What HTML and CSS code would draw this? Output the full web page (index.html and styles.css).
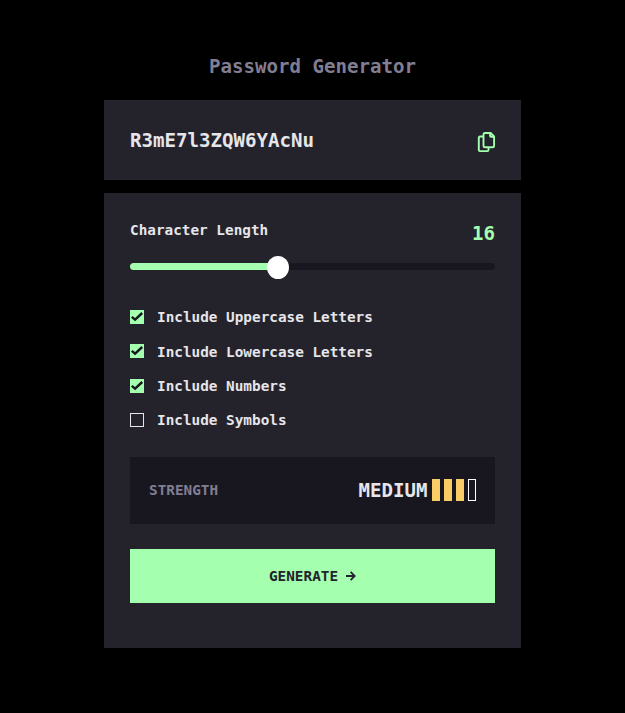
FILE: index.html
```html
<!DOCTYPE html>
<html lang="en">
<head>
<meta charset="utf-8">
<title>Password Generator</title>
<link rel="stylesheet" href="styles.css">
</head>
<body>
<main class="generator">
  <h1 class="title">Password Generator</h1>
  <section class="output">
    <span class="password">R3mE7l3ZQW6YAcNu</span>
    <button class="copy" aria-label="Copy">
      <svg width="19" height="21" viewBox="0 0 19 21" fill="none" stroke="currentColor" stroke-width="1.9" stroke-linejoin="round" stroke-linecap="round"><path d="M6 4.5H3Q1.8 4.5 1.8 5.7V17.9Q1.8 19.1 3 19.1H10.3Q11.5 19.1 11.5 17.9V15.5M7.9 1H13.6L17.1 4.5V13.9Q17.1 15.3 15.7 15.3H7.9Q6.5 15.3 6.5 13.9V2.4Q6.5 1 7.9 1ZM13.1 1.2V4Q13.1 4.8 13.9 4.8H16.8"/></svg>
    </button>
  </section>
  <section class="settings">
    <div class="length"><span>Character Length</span><span class="count">16</span></div>
    <div class="slider"><div class="fill"></div><div class="thumb"></div></div>
    <div class="options">
      <div class="option"><span class="box checked"><svg width="14" height="14" viewBox="0 0 14 14"><path d="M1.8 6.8L5.1 9.6L12.2 3"/></svg></span>Include Uppercase Letters</div>
      <div class="option"><span class="box checked"><svg width="14" height="14" viewBox="0 0 14 14"><path d="M1.8 6.8L5.1 9.6L12.2 3"/></svg></span>Include Lowercase Letters</div>
      <div class="option"><span class="box checked"><svg width="14" height="14" viewBox="0 0 14 14"><path d="M1.8 6.8L5.1 9.6L12.2 3"/></svg></span>Include Numbers</div>
      <div class="option"><span class="box"></span>Include Symbols</div>
    </div>
    <div class="strength">
      <span class="strength-label">STRENGTH</span>
      <span class="level">MEDIUM</span>
      <div class="bars"><i class="bar on"></i><i class="bar on"></i><i class="bar on"></i><i class="bar"></i></div>
    </div>
    <button class="generate">GENERATE<svg width="10" height="10" viewBox="0 0 10 10" fill="none" stroke="currentColor" stroke-width="1.8"><path d="M0 5H8.6M4.6 .8L8.8 5L4.6 9.2"/></svg></button>
  </section>
</main>
</body>
</html>
```
FILE: styles.css
```css
* { box-sizing: border-box; }
body {
  margin: 0;
  background: #000;
  color: #e6e5ea;
  font: bold 14.35px/20px "DejaVu Sans Mono", monospace;
}
button { border: 0; padding: 0; font: inherit; }
svg { display: block; }
.generator { width: 417px; margin: 0 auto 0 104px; padding-top: 54px; }
.title {
  margin: 0 0 20px;
  font-size: 19.13px;
  line-height: 26px;
  text-align: center;
  color: #817d92;
}
.output {
  display: flex;
  align-items: center;
  justify-content: space-between;
  height: 80px;
  padding: 0 25px 0 26px;
  background: #24232b;
}
.password { padding-top: 2px; font-size: 19.13px; line-height: 26px; }
.copy { margin-top: 4px; background: none; color: #a4ffaf; }
.settings { height: 455px; margin-top: 13px; padding: 27px 26px 0; background: #24232b; }
.length { display: flex; justify-content: space-between; height: 43px; }
.count { font-size: 19.13px; line-height: 28px; color: #a4ffaf; }
.slider { position: relative; height: 7px; border-radius: 4px; background: #18171f; }
.fill { width: 148px; height: 7px; border-radius: 4px; background: #a4ffaf; }
.thumb {
  position: absolute;
  top: -7px;
  left: 137px;
  width: 22px;
  height: 23px;
  border-radius: 50%;
  background: #fff;
}
.options { display: grid; gap: 14.3px; margin-top: 37px; }
.option { display: flex; align-items: center; gap: 13px; height: 20px; }
.option:nth-child(2) { line-height: 22px; }
.option:nth-child(2) { align-items: flex-start; }
.option:nth-child(2) .box { margin-top: 3px; }
.box { width: 14px; height: 14px; border: 1px solid #e6e5ea; }
.checked { border: 0; background: #a4ffaf; }
.checked path { fill: none; stroke: #18171f; stroke-width: 2.4; }
.strength {
  display: flex;
  align-items: center;
  height: 67px;
  margin-top: 27px;
  padding: 0 19px;
  background: #18171f;
}
.strength-label { color: #817d92; }
.level { margin-left: auto; padding-top: 2px; font-size: 19.13px; line-height: 26px; }
.bars { display: flex; gap: 4px; margin-left: 4.5px; }
.bar { width: 8px; height: 22px; border: 1px solid #fff; }
.on { border: 0; background: #f8cd65; }
.generate {
  display: flex;
  align-items: center;
  justify-content: center;
  gap: 8px;
  width: 100%;
  height: 54px;
  margin-top: 25px;
  background: #a4ffaf;
  color: #24232b;
}
```
